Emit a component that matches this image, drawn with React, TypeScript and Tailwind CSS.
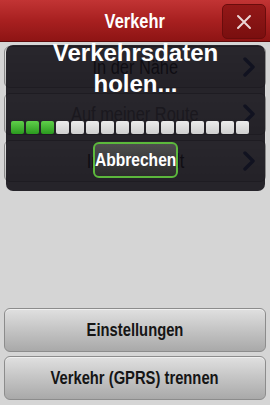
import React from "react";

const sans = { fontFamily: '"Liberation Sans", Arial, sans-serif' };

function N({ children, className }: { children: React.ReactNode; className?: string }) {
  return (
    <span className={`inline-block whitespace-nowrap scale-x-[0.82] ${className ?? ""}`} style={sans}>
      {children}
    </span>
  );
}

function Chevron() {
  return (
    <svg width="14" height="20" viewBox="0 0 14 20" className="absolute right-[9px] top-1/2 -translate-y-1/2">
      <path d="M3 2 L11 10 L3 18" fill="none" stroke="#1a3a7a" strokeWidth="3.5" strokeLinecap="round" strokeLinejoin="round" />
    </svg>
  );
}

function Row({ label, dim }: { label: string; dim?: boolean }) {
  return (
    <div className="relative h-[42px] rounded-[6px] border border-[#8a8a8a] bg-gradient-to-b from-[#e6e6e6] to-[#bdbdbd] flex items-center justify-center">
      <N className={`text-[20px] ${dim ? "text-[#6a6a6a]" : "text-[#0a0a0a]"}`}>{label}</N>
      <Chevron />
    </div>
  );
}

function BigButton({ label }: { label: string }) {
  return (
    <div className="h-[44px] rounded-[6px] border border-[#8c8c8c] bg-gradient-to-b from-[#e0e0e0] via-[#c4c4c4] to-[#a9a9a9] flex items-center justify-center shadow-[inset_0_1px_0_#f0f0f0]">
      <N className="text-[18px] font-bold text-[#151515]">{label}</N>
    </div>
  );
}

export default function App() {
  const segs = Array.from({ length: 16 }, (_, i) => i < 3);
  return (
    <div className="w-[270px] h-[405px] bg-[#d5d5d5] flex flex-col overflow-hidden relative">
      <div className="h-[42px] shrink-0 bg-gradient-to-b from-[#c23434] via-[#a82020] to-[#8e1414] border-b border-[#5e0b0b] relative flex items-center justify-center">
        <N className="text-[20px] font-bold text-white">Verkehr</N>
        <div className="absolute right-[4px] top-[4px] w-[44px] h-[35px] rounded-[5px] bg-gradient-to-b from-[#941818] to-[#7a0f0f] border border-[#6a0c0c] flex items-center justify-center">
          <svg width="16" height="16" viewBox="0 0 16 16">
            <path d="M2 2 L14 14 M14 2 L2 14" stroke="#ecd6d6" strokeWidth="2" strokeLinecap="round" />
          </svg>
        </div>
      </div>

      <div className="flex flex-col gap-[5px] px-[4px] pt-[4px]">
        <Row label="In der Nähe" />
        <Row label="Auf meiner Route" dim />
        <Row label="In einer Stadt" />
      </div>

      <div className="mt-auto flex flex-col gap-[4px] px-[4px] pb-[5px]">
        <BigButton label="Einstellungen" />
        <BigButton label="Verkehr (GPRS) trennen" />
      </div>

      <div className="absolute left-[6px] top-[45px] w-[259px] h-[146px] rounded-[7px] bg-[rgba(16,14,20,0.885)] flex flex-col items-center">
        <div className="-mt-[8px] text-center text-white font-bold text-[24px] leading-[31px]" style={sans}>
          Verkehrsdaten<br />holen...
        </div>
        <div className="mt-[22px] self-start ml-[5px] flex gap-[2px]">
          {segs.map((on, i) => (
            <div
              key={i}
              className={
                on
                  ? "w-[13px] h-[13px] rounded-[2px] bg-gradient-to-b from-[#5fd04a] to-[#2a9a1e]"
                  : "w-[13px] h-[13px] rounded-[2px] bg-gradient-to-b from-[#ececec] to-[#cfcfcf]"
              }
            />
          ))}
        </div>
        <div className="mt-[8px] w-[85px] h-[36px] rounded-[6px] border-2 border-[#5cb83c] bg-gradient-to-b from-[#4e4e4e] to-[#2c2c2c] flex items-center justify-center">
          <N className="text-[19px] font-bold text-white">Abbrechen</N>
        </div>
      </div>
    </div>
  );
}
